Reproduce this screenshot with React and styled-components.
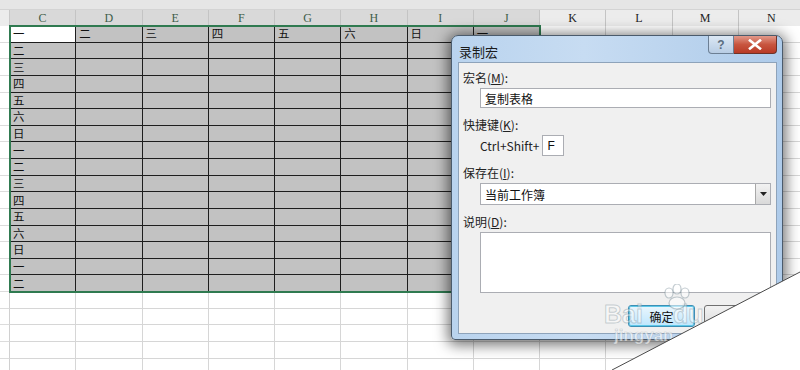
import React from 'react'
import styled, { createGlobalStyle } from 'styled-components'

const COL_W = 66.25
const ROW_H = 16.625
const days = ['一', '二', '三', '四', '五', '六', '日']
const selCols = ['C', 'D', 'E', 'F', 'G', 'H', 'I', 'J']
const restCols = ['K', 'L', 'M', 'N']

const GlobalStyle = createGlobalStyle`
    html, body {
        margin: 0;
        padding: 0;
        background: #fff;
    }
    body {
        width: 800px;
        height: 370px;
        overflow: hidden;
        font-family: "Noto Sans CJK SC", "Liberation Sans", sans-serif;
    }
`

const App = () => {
    const firstRow = [...days, '一']
    const colC = [...days, ...days, '一', '二']

    return (
        <Stage>
            <GlobalStyle />
            <TopStrip />
            <HeaderRow>
                <Corner />
                {selCols.map(c => <ColHead key={c} $sel>{c}</ColHead>)}
                {restCols.map(c => <ColHead key={c}>{c}</ColHead>)}
            </HeaderRow>

            <TopSection>
                <RowHeads>
                    {colC.map((_, i) => <RowHead key={i} />)}
                </RowHeads>
                <SelBlock>
                    {colC.map((d, r) =>
                        selCols.map((c, ci) => {
                            let text = ''
                            if (r === 0) text = firstRow[ci]
                            else if (ci === 0) text = d
                            return (
                                <SelCell key={c + r} $active={r === 0 && ci === 0}>
                                    {text}
                                </SelCell>
                            )
                        })
                    )}
                </SelBlock>
                <PlainGrid $cols={restCols.length}>
                    {colC.map((_, r) => restCols.map(c => <PlainCell key={c + r} />))}
                </PlainGrid>
            </TopSection>

            <BottomSection>
                {[0, 1, 2, 3, 4].map(r => (
                    <React.Fragment key={r}>
                        <RowHead />
                        {[...selCols, ...restCols].map(c => <PlainCell key={c} />)}
                    </React.Fragment>
                ))}
            </BottomSection>

            <Dialog>
                <TitleBar>
                    <Title>录制宏</Title>
                    <Caption>
                        <HelpBtn>?</HelpBtn>
                        <CloseBtn>
                            <svg width="14" height="11" viewBox="0 0 14 11">
                                <path d="M2 1.5 L12 9.5 M12 1.5 L2 9.5" stroke="#fff" strokeWidth="2.6" strokeLinecap="square" />
                            </svg>
                        </CloseBtn>
                    </Caption>
                </TitleBar>
                <Client>
                    <Label>宏名(<u>M</u>):</Label>
                    <TextBox>复制表格</TextBox>

                    <Label $gap>快捷键(<u>K</u>):</Label>
                    <ShortcutRow>
                        <span>Ctrl+Shift+</span>
                        <KeyBox>F</KeyBox>
                    </ShortcutRow>

                    <Label $gap>保存在(<u>I</u>):</Label>
                    <Select>
                        <span>当前工作簿</span>
                        <DropBtn>
                            <svg width="7" height="4" viewBox="0 0 7 4">
                                <path d="M0 0 H7 L3.5 4 Z" fill="#222" />
                            </svg>
                        </DropBtn>
                    </Select>

                    <Label $gap>说明(<u>D</u>):</Label>
                    <TextArea />

                    <Buttons>
                        <Button $default>确定</Button>
                        <Button>取消</Button>
                    </Buttons>
                </Client>
            </Dialog>

            <Watermark>
                <Paw width="34" height="26" viewBox="0 0 34 26">
                    <g fill="rgba(255,255,255,0.55)" stroke="rgba(120,140,150,0.45)" strokeWidth="1.2">
                        <ellipse cx="9" cy="9" rx="4" ry="5" />
                        <ellipse cx="17" cy="5" rx="4" ry="5" />
                        <ellipse cx="25" cy="9" rx="4" ry="5" />
                        <ellipse cx="17" cy="19" rx="8" ry="6" />
                    </g>
                </Paw>
                <WmLine>
                    <WmBig>Bai</WmBig>
                    <WmBig>du</WmBig>
                </WmLine>
                <WmSmall>jingyan</WmSmall>
            </Watermark>

            <Curl viewBox="0 0 800 370" width="800" height="370">
                <defs>
                    <linearGradient id="curlShade" x1="0" y1="0" x2="1" y2="1">
                        <stop offset="0" stopColor="#f2f2f2" />
                        <stop offset="0.25" stopColor="#ffffff" />
                    </linearGradient>
                </defs>
                <polygon points="800,272 612,370 800,370" fill="url(#curlShade)" />
                <line x1="800" y1="272" x2="612" y2="370" stroke="#4a4a4a" strokeWidth="1" />
            </Curl>
        </Stage>
    )
}

const Stage = styled.div`
    position: relative;
    width: 800px;
    height: 370px;
    overflow: hidden;
    background: #fff;
`

const TopStrip = styled.div`
    height: 9px;
    background: #e6e6e6;
    border-bottom: 1px solid #d4d4d4;
`

const HeaderRow = styled.div`
    display: flex;
    height: 16px;
    background: #ececec;
`

const Corner = styled.div`
    flex: 0 0 10px;
    border-right: 1px solid #c8c8c8;
    box-sizing: border-box;
`

const ColHead = styled.div`
    flex: 0 0 ${COL_W}px;
    box-sizing: border-box;
    display: flex;
    align-items: center;
    justify-content: center;
    font-family: "Liberation Serif", "DejaVu Serif", serif;
    font-size: 12px;
    color: ${p => (p.$sel ? '#3f5e4a' : '#222')};
    background: ${p => (p.$sel ? '#d9d9d9' : '#ececec')};
    border-right: 1px solid #c4c4c4;
`

const TopSection = styled.div`
    display: flex;
    align-items: flex-start;
`

const RowHeads = styled.div`
    flex: 0 0 10px;
    display: flex;
    flex-direction: column;
`

const RowHead = styled.div`
    height: ${ROW_H}px;
    box-sizing: border-box;
    background: #fff;
    border-bottom: 1px solid #dcdcdc;
    border-right: 1px solid #d0d0d0;
`

const SelBlock = styled.div`
    flex: 0 0 ${COL_W * 8}px;
    display: grid;
    grid-template-columns: repeat(8, ${COL_W}px);
    grid-auto-rows: ${ROW_H}px;
    outline: 2px solid #2f7a50;
    outline-offset: -1px;
    position: relative;
    z-index: 1;
`

const SelCell = styled.div`
    box-sizing: border-box;
    background: ${p => (p.$active ? '#fff' : '#c2c2c2')};
    border-right: 1px solid #1e1e1e;
    border-bottom: 1px solid #1e1e1e;
    padding-left: 3px;
    display: flex;
    align-items: center;
    font-size: 11.4px;
    line-height: 15px;
    color: #111;
`

const PlainGrid = styled.div`
    flex: 0 0 auto;
    display: grid;
    grid-template-columns: repeat(${p => p.$cols}, ${COL_W}px);
    grid-auto-rows: ${ROW_H}px;
`

const PlainCell = styled.div`
    box-sizing: border-box;
    background: #fff;
    border-right: 1px solid #d6d6d6;
    border-bottom: 1px solid #d6d6d6;
`

const BottomSection = styled.div`
    display: grid;
    grid-template-columns: 10px repeat(12, ${COL_W}px);
    grid-auto-rows: ${ROW_H}px;
`

const Dialog = styled.div`
    position: absolute;
    left: 451px;
    top: 35px;
    width: 332px;
    height: 305px;
    box-sizing: border-box;
    display: flex;
    flex-direction: column;
    border: 1px solid #4b5b6c;
    border-radius: 7px 7px 4px 4px;
    background: linear-gradient(90deg, #b9d3ee 0%, #c7dcf2 40%, #aecbea 100%);
    box-shadow: 0 2px 14px 3px rgba(0, 0, 0, 0.55);
    padding: 0 5px 5px 6px;
    z-index: 5;
`

const TitleBar = styled.div`
    height: 26px;
    display: flex;
    align-items: flex-start;
    justify-content: space-between;
`

const Title = styled.div`
    margin-top: 8px;
    margin-left: 1px;
    font-size: 13px;
    color: #1c1c1c;
    line-height: 16px;
`

const Caption = styled.div`
    display: flex;
`

const HelpBtn = styled.div`
    width: 26px;
    height: 18px;
    box-sizing: border-box;
    display: flex;
    align-items: center;
    justify-content: center;
    font-family: "Liberation Sans", sans-serif;
    font-weight: bold;
    font-size: 12px;
    color: #5b6d80;
    background: linear-gradient(#dbe7f4, #b8cde4);
    border: 1px solid #6c7f94;
    border-top: none;
    border-radius: 0 0 0 4px;
`

const CloseBtn = styled.div`
    width: 43px;
    height: 18px;
    box-sizing: border-box;
    display: flex;
    align-items: center;
    justify-content: center;
    background: linear-gradient(#e2998a, #c8553f 50%, #b83a26);
    border: 1px solid #6e3228;
    border-top: none;
    border-left: none;
    border-radius: 0 0 4px 0;
`

const Client = styled.div`
    flex: 1;
    display: flex;
    flex-direction: column;
    background: #f0f0f0;
    border: 1px solid #8ea3ba;
    padding: 7px 5px 0 4px;
`

const Label = styled.div`
    font-size: 12px;
    line-height: 16px;
    color: #222;
    margin-top: ${p => (p.$gap ? '9px' : '0')};
    u {
        text-underline-offset: 1px;
    }
`

const boxBase = `
    box-sizing: border-box;
    background: #fff;
    border: 1px solid #abadb3;
    font-size: 12px;
    color: #111;
`

const TextBox = styled.div`
    ${boxBase}
    margin: 2px 0 0 17px;
    height: 20px;
    padding-left: 4px;
    display: flex;
    align-items: center;
`

const ShortcutRow = styled.div`
    display: flex;
    align-items: center;
    margin: 2px 0 0 17px;
    font-size: 12px;
    color: #222;
    span {
        margin-right: 3px;
    }
`

const KeyBox = styled.div`
    ${boxBase}
    width: 22px;
    height: 21px;
    padding-left: 4px;
    display: flex;
    align-items: center;
    font-family: "Liberation Sans", sans-serif;
`

const Select = styled.div`
    ${boxBase}
    margin: 2px 0 0 17px;
    height: 22px;
    display: flex;
    align-items: center;
    justify-content: space-between;
    padding-left: 4px;
`

const DropBtn = styled.div`
    width: 15px;
    height: 20px;
    box-sizing: border-box;
    display: flex;
    align-items: center;
    justify-content: center;
    background: linear-gradient(#f2f2f2, #d9d9d9);
    border-left: 1px solid #a8a8a8;
`

const TextArea = styled.div`
    ${boxBase}
    margin: 2px 0 0 17px;
    height: 61px;
`

const Buttons = styled.div`
    display: flex;
    justify-content: flex-end;
    gap: 9px;
    margin-top: 12px;
`

const Button = styled.div`
    width: 67px;
    height: 22px;
    box-sizing: border-box;
    display: flex;
    align-items: center;
    justify-content: center;
    font-size: 12px;
    color: #111;
    border-radius: 3px;
    border: 1px solid ${p => (p.$default ? '#3c8fb5' : '#707070')};
    background: ${p => (p.$default ? 'linear-gradient(#eaf6fd, #bee6fd)' : 'linear-gradient(#f2f2f2, #dddddd)')};
    box-shadow: ${p => (p.$default ? 'inset 0 0 0 1px #5ec8e8' : 'none')};
`

const Watermark = styled.div`
    position: absolute;
    left: 604px;
    top: 290px;
    width: 100px;
    z-index: 6;
    display: flex;
    flex-direction: column;
    align-items: flex-start;
    pointer-events: none;
`

const Paw = styled.svg`
    position: absolute;
    left: 56px;
    top: -6px;
`

const WmLine = styled.div`
    display: flex;
    gap: 30px;
    margin-top: 12px;
`

const WmBig = styled.span`
    font-family: "Liberation Sans", sans-serif;
    font-weight: bold;
    font-size: 25px;
    line-height: 25px;
    color: rgba(255, 255, 255, 0.45);
    -webkit-text-stroke: 1px rgba(110, 130, 140, 0.35);
`

const WmSmall = styled.div`
    margin-left: 10px;
    font-family: "Liberation Sans", sans-serif;
    font-weight: bold;
    font-size: 17px;
    line-height: 18px;
    color: rgba(255, 255, 255, 0.6);
    -webkit-text-stroke: 0.6px rgba(110, 130, 140, 0.35);
`

const Curl = styled.svg`
    position: absolute;
    left: 0;
    top: 0;
    z-index: 7;
    pointer-events: none;
`

export default App
